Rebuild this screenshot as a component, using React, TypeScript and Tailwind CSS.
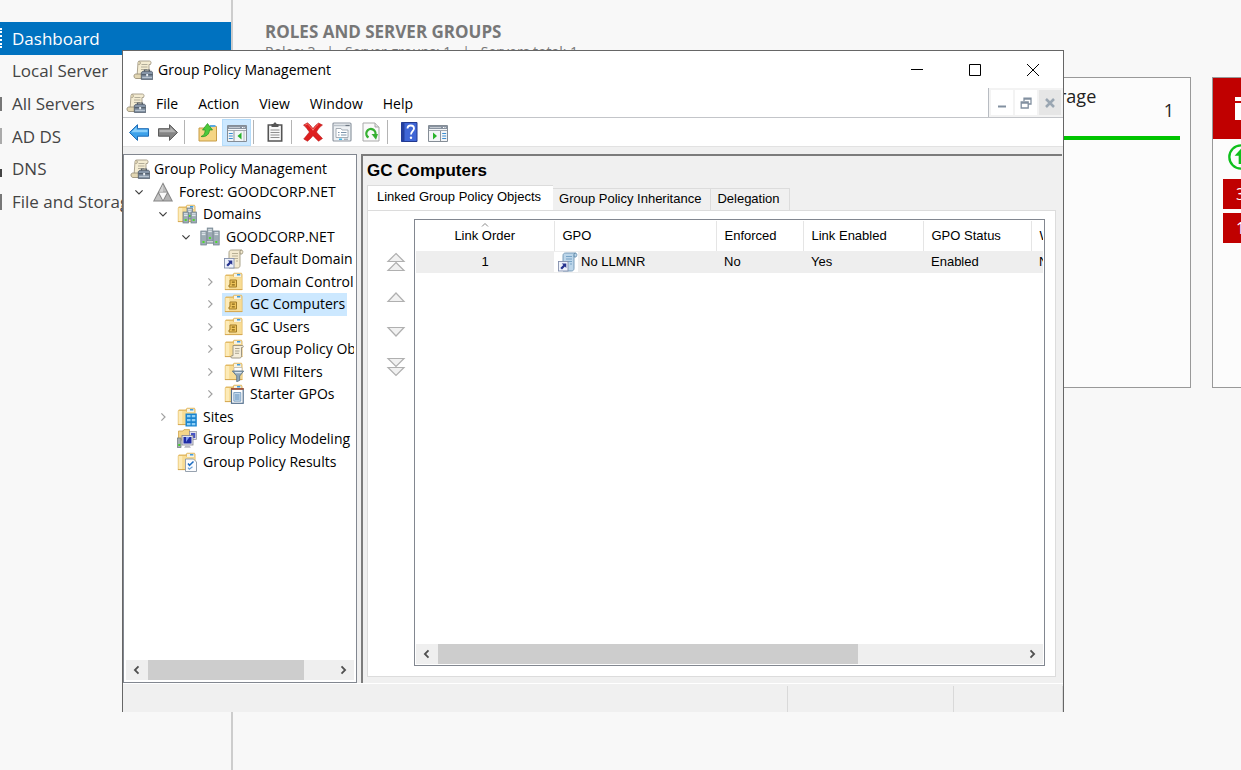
import React from "react";

type P = { className?: string };

const Svg = ({ className = "size-5", children }: { className?: string; children: React.ReactNode }) => (
  <svg viewBox="0 0 20 20" className={`${className} shrink-0`} fill="none" aria-hidden="true">
    {children}
  </svg>
);

const FolderShape = () => (
  <>
    <path d="M.8 4 2 2.500h6.500L10 .8h7.500l1 1.400V18H.8z" fill="#e3bb66" />
    <path d="M10 1.800h7.300v3.400H10z" fill="#f7f3e3" />
    <path d="M13 2h3.300v1.500H13z" fill="#3f9be0" />
    <path d="M1.600 4h7.200l1.500 1.200h7.500V17.200H1.600z" fill="#f8dc94" />
    <path d="M1.600 4h3.600v13.200H1.600z" fill="#fdebb8" />
    <path d="M1 17.300h17.300v.8H1z" fill="#cfa048" />
  </>
);

const ScrollShape = () => (
  <>
    <path d="M5 2.500C5 1.500 6 1 7 1h9.500c1 0 1.700.8 1.500 2l-.5 1.500h-1.500V17H4z" fill="#f4ecd2" stroke="#a39a86" strokeWidth=".9" />
    <path d="M5 1.500c1.500-.6 2.500.3 2.500 1.500S6.500 5 5.200 4.500" fill="#d9cfae" stroke="#a39a86" strokeWidth=".7" />
    <path d="M8.500 4.500h6M8 7h6.500M8 9.500h6" stroke="#aaa693" strokeWidth=".9" />
    <path d="M1 16c0-1.300.8-2 2-2h8v4.500H3c-1.200 0-2-1-2-2.500z" fill="#e2d6b2" stroke="#9b927c" strokeWidth=".9" />
  </>
);

const GpmIcon = ({ className }: P) => (
  <Svg className={className}>
    <ScrollShape />
    <path d="M11.500 12V10h5v2" stroke="#555d66" strokeWidth="1.200" />
    <path d="M8.300 12.500 10 11.300h8.500l1.300 1.200v6.900H8.300z" fill="#8796a8" stroke="#4b5766" strokeWidth=".8" />
    <path d="M8.800 14.800h10.700" stroke="#39434f" strokeWidth=".9" />
    <path d="M13.200 14h1.900v2.300h-1.900z" fill="#e8edf2" />
    <path d="M9.200 17.500h9.800" stroke="#b6c2ce" strokeWidth="1" />
  </Svg>
);

const ForestIcon = () => (
  <Svg>
    <path d="M10 .3 20 19.500H0z" fill="#858585" />
    <path d="M10 2.500 13.800 9.800H6.200z" fill="#bdbdbd" />
    <path d="M10 2.500V9.800H6.200z" fill="#d2d2d2" />
    <path d="M5.300 11.400 9.300 18.600H1.500z" fill="#c2c2c2" />
    <path d="M14.700 11.400 18.500 18.600h-7.800z" fill="#b2b2b2" />
    <path d="M6 10.600h8L10 18z" fill="#fafafa" />
  </Svg>
);

const Server = ({ x, y, h }: { x: number; y: number; h: number }) => (
  <g>
    <rect x={x} y={y} width="5.600" height={h} fill="#9dabb4" stroke="#6d7e8a" strokeWidth=".7" />
    <path d={`M${x + 1} ${y + 1.8}h3.600M${x + 1} ${y + 3.6}h3.600`} stroke="#eef4f7" strokeWidth=".9" />
    <rect x={x + 1.7} y={y + h - 4} width="2" height="2" fill="#4ddb2c" />
  </g>
);

const DomainsIcon = () => (
  <Svg>
    <FolderShape />
    <Server x={10} y={4} h={11} />
    <Server x={6} y={8} h={11} />
    <Server x={14} y={8} h={11} />
  </Svg>
);

const DomainIcon = () => (
  <Svg>
    <Server x={7.2} y={1} h={13} />
    <Server x={0.8} y={4} h={14} />
    <Server x={13.6} y={4} h={14} />
    <path d="M6.600 16h7" stroke="#697a86" strokeWidth="1.200" />
  </Svg>
);

const LinkIcon = ({ blue = false }: { blue?: boolean }) => (
  <Svg>
    <path d="M5 3.500C5 2 6 1 7.500 1H17c1.500 0 2 1 1.800 2.300L18 5h-2v11.500c0 1.500-1 2.500-2.500 2.500H5z" fill={blue ? "#bcd6ea" : "#f3ead0"} stroke={blue ? "#6d93b2" : "#a0987f"} strokeWidth=".9" />
    <path d="M16 5V2.500C16 1.500 17 1 17.500 1.200" stroke={blue ? "#55809f" : "#948b72"} strokeWidth="1" />
    <path d="M8 4.500h6M8 7h6M10 9.500h4M12 12h2" stroke={blue ? "#6f9dc2" : "#b1a98f"} strokeWidth=".9" />
    <rect x=".5" y="9.500" width="9.500" height="9.500" fill="#eef2fb" stroke="#8490ad" strokeWidth=".9" />
    <path d="M3.800 11.500h4.500v4.500L6.900 14.600 4 17.500 2.300 15.900 5.300 13z" fill="#26338f" />
  </Svg>
);

const OuIcon = () => (
  <Svg>
    <FolderShape />
    <path d="M6 8h6.500v7H5V13h1z" fill="#eec35a" stroke="#a27c28" strokeWidth="1" />
    <path d="M7.800 9.500h3v1.300h-3zM7.800 12.300h3v1.300h-3z" fill="#866516" />
  </Svg>
);

const GpoFolderIcon = () => (
  <Svg>
    <FolderShape />
    <path d="M9 6.500h9.500c1 0 1 2 0 2H17.500v8.300c0 1.500-.8 2.200-2 2.200H8c-1.600 0-1.600-2.300 0-2.300h1z" fill="#f5eedb" stroke="#948c7b" strokeWidth=".9" />
    <path d="M11 9.500h4.500M11 12h4.500M11 14.300h4" stroke="#a49c88" strokeWidth=".9" />
  </Svg>
);

const WmiIcon = () => (
  <Svg>
    <FolderShape />
    <path d="M10 5.500h8v4h-8z" fill="#fff" stroke="#aaa" strokeWidth=".6" />
    <path d="M8.300 9h11.400l-4 5v4.500l-3 1.200V14z" fill="#8fa6b8" stroke="#566f84" strokeWidth=".8" />
    <path d="M10.500 10h7.500l-1 1.300h-5.500z" fill="#dae5ec" />
  </Svg>
);

const StarterIcon = () => (
  <Svg>
    <FolderShape />
    <rect x="7.500" y="5" width="11.700" height="14.300" fill="#fff" stroke="#56728f" strokeWidth="1.200" />
    <path d="M7 4h12.700v1.800H7z" fill="#a4553b" />
    <path d="M9.800 8.500h7v8.700h-7z" fill="#c4dbee" stroke="#6c92b5" strokeWidth=".8" />
    <path d="M11 11h4.500M11 13h4.500M11 15h4.500" stroke="#5587b3" strokeWidth=".9" />
  </Svg>
);

const SitesIcon = () => (
  <Svg>
    <FolderShape />
    <path d="M8.500 6.500h11.300v13H8.500z" fill="#1b84cf" />
    <path d="M10 8h3.500v2.300H10zM14.800 8h3.500v2.300h-3.500zM10 12h3.500v2.300H10zM14.800 12h3.500v2.300h-3.500zM10 16h3.500v2.300H10zM14.800 16h3.500v2.300h-3.500z" fill="#8fd0f7" />
  </Svg>
);

const ModelingIcon = () => (
  <Svg>
    <path d="M1.500 2h4.500L7 .6h5.500V11h-11z" fill="#f5d68a" stroke="#d0a54b" strokeWidth=".8" />
    <rect x=".5" y="9" width="3.500" height="9.500" fill="#a7b0b3" stroke="#68757a" strokeWidth=".7" />
    <path d="M1.300 15h2v2h-2z" fill="#43cf28" />
    <rect x="12.500" y="2.500" width="7" height="8" fill="#e2e2ea" stroke="#8b8b99" strokeWidth=".7" />
    <path d="M14 4h4.300v5H14z" fill="#4854c4" />
    <rect x="5" y="6.500" width="11" height="9.500" fill="#e4e4ec" stroke="#82828f" strokeWidth=".8" />
    <path d="M6.500 8h8v6.500h-8z" fill="#1f2ba6" />
    <path d="M9 8h3.500L9 13z" fill="#7f9bf0" />
    <path d="M8.500 16.500h4l1.500 2.300H7z" fill="#b9b9c2" />
  </Svg>
);

const ResultsIcon = () => (
  <Svg>
    <FolderShape />
    <path d="M8.500 7h8l3 3v9.500h-11z" fill="#fbfcfe" stroke="#8b97a6" strokeWidth=".9" />
    <path d="m11 11.500 1.500 1.800 4-3.800" stroke="#1c6cc0" strokeWidth="1.500" />
    <path d="m11 15.700 1.300 1.500 3.200-2.500" stroke="#6aa0d6" strokeWidth="1.200" />
  </Svg>
);

const BackIcon = () => (
  <Svg>
    <path d="M.5 10.500 8.500 2.700V6.700H19.500v7.500H8.500v4.200z" fill="#3ea2ea" stroke="#1c69b4" strokeWidth="1" />
    <path d="M2.200 10.200 7.600 5V7.700h10.900v2.500z" fill="#8bd0fb" />
  </Svg>
);
const ForwardIcon = () => (
  <Svg>
    <path d="M19.500 10.500 11.500 2.700V6.700H.5v7.500h11v4.200z" fill="#858585" stroke="#5c5c5c" strokeWidth="1" />
    <path d="M17.800 10.200 12.400 5V7.700H1.500v2.500z" fill="#b3b3b3" />
  </Svg>
);
const UpFolderIcon = () => (
  <Svg>
    <path d="M1 6h7l1.500-1.500H18.500V19H1z" fill="#f5d584" stroke="#c79c46" strokeWidth="1" />
    <path d="M12 3h5.500v2H12z" fill="#5aa9e2" />
    <path d="M3 14.500c3-1 4-3 4.200-6.500H4.500l5-6.500L14.500 8h-3c0 4-3.500 7.500-8.500 6.500z" fill="#4dc93b" stroke="#259220" strokeWidth=".7" />
  </Svg>
);
const PaneIcon = ({ flip = false }: { flip?: boolean }) => (
  <Svg>
    <path d="M.5 3.500h19v16H.5z" fill="#f3f5f7" stroke="#858d96" strokeWidth="1" />
    <path d="M1 4h18v3H1z" fill="#8993a0" />
    <path d="M2 5.500h11" stroke="#c4cad1" strokeWidth="1" />
    <path d="M15 5.500h3" stroke="#fff" strokeWidth="1" strokeDasharray="1 .6" />
    <path d="M1 8.500h18" stroke="#8d959e" strokeWidth=".8" />
    {flip ? (
      <>
        <path d="M12.500 9v10" stroke="#8d959e" strokeWidth="1" />
        <path d="M14.200 11.500h4M14.200 14h4M14.200 16.500h4" stroke="#3d8ed1" strokeWidth="1.200" />
        <path d="M5 10.500 9 14l-4 3.500z" fill="#27b32a" />
      </>
    ) : (
      <>
        <path d="M7 9v10" stroke="#8d959e" strokeWidth="1" />
        <path d="M1.800 11.500h4M1.800 14h4M1.800 16.500h4" stroke="#3d8ed1" strokeWidth="1.200" />
        <path d="M14.500 10.500 10.500 14l4 3.500z" fill="#27b32a" />
        <path d="M17 9v10" stroke="#a6adb5" strokeWidth=".8" />
      </>
    )}
  </Svg>
);
const ClipboardIcon = () => (
  <Svg>
    <path d="M3.300 3h13.400v16H3.300z" fill="#f9f9f9" stroke="#555" strokeWidth="1.600" />
    <path d="M6.500 3V2h2c0-2 3-2 3 0h2v3h-7z" fill="#555" />
    <path d="M5.500 8h9M5.500 10.500h9M5.500 13h9M5.500 15.500h9" stroke="#8f8f8f" strokeWidth="1.100" />
  </Svg>
);
const DeleteIcon = () => (
  <Svg>
    <path d="M.5 3 4.500.8c2 1.500 3.800 3.400 5.500 5.700 1.500-2.300 3.300-4 5.500-5.500L19.500 3c-2.700 2-4.700 4.500-6 7 2.300 2.700 4.300 4.700 6 6.500L15.500 19.300c-2-2-3.700-4-5.500-5.600-1.700 2-3.500 4-5.500 5.600L.7 17c2-2.500 3.800-4.500 5.700-7-1.700-2.500-3.700-5-5.900-7z" fill="#de1f1f" stroke="#b01212" strokeWidth=".5" />
    <path d="M2.200 3 4.300 1.900c2 1.500 4 3.500 5.700 6.400C11.500 6 13.500 3.500 15.500 2" stroke="#f6746f" strokeWidth="1" />
  </Svg>
);
const PropertiesIcon = () => (
  <Svg>
    <rect x="1" y="1" width="18" height="18" rx="1" fill="#eef1f4" stroke="#8f98a2" strokeWidth="1.200" />
    <path d="M2 3.500h16" stroke="#b9c1c9" strokeWidth="1.500" />
    <path d="M13.500 3.500h4" stroke="#6d7782" strokeWidth="1.200" />
    <path d="M4 6.500h5L10 8h6v7.500H4z" fill="#fff" stroke="#9ca5ae" strokeWidth=".9" />
    <path d="M6 10.500h1.500M9 10.500h5.500M6 13h1.500M9 13h5.500" stroke="#7d94aa" strokeWidth="1.100" />
    <path d="M7 17.300h3" stroke="#3fb8e8" strokeWidth="1.500" />
    <path d="M12 17.300h4" stroke="#aab3bc" strokeWidth="1.500" />
  </Svg>
);
const RefreshIcon = () => (
  <Svg>
    <path d="M2 1h12l4 4v14H2z" fill="#fafafa" stroke="#a9a9a9" strokeWidth="1" />
    <path d="M14 1v4h4" fill="#e2e2e2" stroke="#a9a9a9" strokeWidth="1" />
    <path d="M7.500 15.500A4.600 4.600 0 1 1 14.300 13" stroke="#37b032" strokeWidth="2.300" />
    <path d="M10.500 12h6.500L15 17.700z" fill="#37b032" />
  </Svg>
);
const HelpIcon = () => (
  <Svg>
    <path d="M2.500.5h15.500v19H2.500z" fill="#3f66d6" stroke="#22398f" strokeWidth="1" />
    <path d="M2.500.5H5.500v19H2.500z" fill="#2440a0" />
    <path d="M8.500 6.500c0-4 6.500-4 6.500 0 0 2.500-3 3-3 6" stroke="#fff" strokeWidth="1.800" />
    <circle cx="12" cy="15.700" r="1.200" fill="#fff" />
  </Svg>
);

const Chevron = ({ open }: { open: boolean }) => (
  <Svg className="size-4">
    {open ? (
      <path d="m5.500 8 4.500 4.500L14.500 8" stroke="#404040" strokeWidth="1.500" />
    ) : (
      <path d="m8 5.500 4.500 4.500L8 14.500" stroke="#a0a0a0" strokeWidth="1.500" />
    )}
  </Svg>
);

type Node = { level: number; label: string; icon: React.ReactNode; open?: boolean; selected?: boolean };

const indents = ["pl-1", "pl-[5px]", "pl-[29px]", "pl-[52px]", "pl-[76px]"];

const tree: Node[] = [
  { level: 0, label: "Group Policy Management", icon: <GpmIcon /> },
  { level: 1, label: "Forest: GOODCORP.NET", icon: <ForestIcon />, open: true },
  { level: 2, label: "Domains", icon: <DomainsIcon />, open: true },
  { level: 3, label: "GOODCORP.NET", icon: <DomainIcon />, open: true },
  { level: 4, label: "Default Domain Policy", icon: <LinkIcon /> },
  { level: 4, label: "Domain Controllers", icon: <OuIcon />, open: false },
  { level: 4, label: "GC Computers", icon: <OuIcon />, open: false, selected: true },
  { level: 4, label: "GC Users", icon: <OuIcon />, open: false },
  { level: 4, label: "Group Policy Objects", icon: <GpoFolderIcon />, open: false },
  { level: 4, label: "WMI Filters", icon: <WmiIcon />, open: false },
  { level: 4, label: "Starter GPOs", icon: <StarterIcon />, open: false },
  { level: 2, label: "Sites", icon: <SitesIcon />, open: false },
  { level: 2, label: "Group Policy Modeling", icon: <ModelingIcon /> },
  { level: 2, label: "Group Policy Results", icon: <ResultsIcon /> },
];

const TreeRow = ({ node }: { node: Node }) => (
  <li className={`flex min-h-0 flex-1 items-center whitespace-nowrap ${indents[node.level]}`}>
    {node.level > 0 && (
      <span className="mr-1 flex w-4 shrink-0">{node.open !== undefined && <Chevron open={node.open} />}</span>
    )}
    <button
      type="button"
      className={`flex h-full items-center text-left ${node.level === 0 ? "gap-1" : "gap-1.5 px-0.5"} ${
        node.selected ? "bg-[#cce8ff]" : ""
      }`}
    >
      {node.icon}
      <span>{node.label}</span>
    </button>
  </li>
);

const ScrollArrow = ({ dir }: { dir: "left" | "right" }) => (
  <button type="button" aria-label={`Scroll ${dir}`} className="flex w-[22px] shrink-0 items-center justify-center">
    <Svg className="size-3">
      <path d={dir === "left" ? "m12.500 4-6 6 6 6" : "m7.500 4 6 6-6 6"} stroke="#505050" strokeWidth="3" />
    </Svg>
  </button>
);

const ScrollBar = ({ size }: { size: "tree" | "list" }) => (
  <div className="flex h-5 shrink-0 bg-[#efefef]">
    <ScrollArrow dir="left" />
    <div className="flex-1">
      <div className={`h-full bg-[#cdcdcd] ${size === "tree" ? "w-[85%]" : "w-[72%]"}`} />
    </div>
    <ScrollArrow dir="right" />
  </div>
);

const Tool = ({ label, active, children }: { label: string; active?: boolean; children: React.ReactNode }) => (
  <button
    type="button"
    aria-label={label}
    className={`flex h-[27px] w-[29px] items-center justify-center ${active ? "border border-[#b5dcfa] bg-[#cce8ff]" : ""}`}
  >
    {children}
  </button>
);
const Divider = () => <span className="h-6 w-px bg-[#b4b4b4]" />;

const OrderIcon = ({ kind }: { kind: string }) => (
  <svg viewBox="0 0 20 20" className="size-5" fill="#f1f1f1" stroke="#b0b0b0" strokeWidth="1.200" aria-hidden="true">
    {kind === "Move to top" && <path d="M10 1.500 18 9.500H2zM10 10.500 18 18.500H2z" />}
    {kind === "Move up" && <path d="M10 6 18 14.500H2z" />}
    {kind === "Move down" && <path d="M2 5.500h16L10 14z" />}
    {kind === "Move to bottom" && <path d="M2 1.500h16l-8 8zM2 10.500h16l-8 8z" />}
  </svg>
);

const servers = ["Dashboard", "Local Server", "All Servers", "AD DS", "DNS", "File and Storage Services"];
const glyphs = [
  "h-5 border-r-2 border-dotted border-white",
  "",
  "h-3.5 bg-[#777]",
  "h-4 bg-[#aaa]",
  "mt-2 h-2 bg-[#444]",
  "h-4 bg-[#777]",
];

const Sidebar = () => (
  <nav className="w-[233px] shrink-0 border-r-2 border-[#cdcdcd] pt-[22px] text-[17px] text-[#444]">
    <ul className="flex h-[196px] flex-col">
      {servers.map((s, i) => (
        <li key={s} className="flex flex-1">
          <a href="#" className={`flex flex-1 items-center gap-[10px] whitespace-nowrap ${i === 0 ? "bg-[#0072c0] text-white" : ""}`}>
            <span className={`w-0.5 ${glyphs[i]}`} />
            {s}
          </a>
        </li>
      ))}
    </ul>
  </nav>
);

const Dashboard = () => (
  <main className="min-w-0 flex-1 overflow-hidden pt-5 text-[#777]">
    <h1 className="pl-8 text-[17px] leading-6 font-bold">ROLES AND SERVER GROUPS</h1>
    <p className="pl-8 text-sm leading-4 whitespace-pre">{"Roles: 3   |   Server groups: 1   |   Servers total: 1"}</p>
    <div className="mt-[17px] ml-[734px] flex h-[311px] gap-[21px]">
      <section className="w-[224px] shrink-0 border border-[#999] bg-[#fcfcfc] px-[10px] text-[#222]">
        <div className="flex h-[62px] items-start justify-between border-b-4 border-[#00c400] pr-1.5">
          <h2 className="-ml-4 pt-1.5 text-lg leading-6">File and Storage</h2>
          <span className="pt-5 text-lg leading-6">1</span>
        </div>
      </section>
      <section className="w-[224px] shrink-0 border border-[#999] bg-[#fcfcfc] text-white">
        <div className="flex h-[61px] items-center bg-[#c00000] pl-[22px]">
          <svg viewBox="0 0 24 24" className="size-6" fill="#fff" aria-hidden="true">
            <path d="M0 0h24v4H0zM0 6h24v17H0z" />
          </svg>
        </div>
        <div className="flex flex-col items-start gap-1 pt-1 pl-[10px]">
          <svg viewBox="0 0 24 24" className="mb-1 ml-1 size-7" fill="none" aria-hidden="true">
            <circle cx="12" cy="12" r="10" stroke="#0fc01c" strokeWidth="2" />
            <path d="M12 5 6.500 11H10v7h4v-7h3.500z" fill="#0fc01c" />
          </svg>
          <span className="w-12 bg-[#c00000] pl-[13px] text-base leading-[30px]">3</span>
          <span className="w-12 bg-[#c00000] pl-[13px] text-base leading-[30px]">1</span>
        </div>
      </section>
    </div>
  </main>
);

const tabs = ["Linked Group Policy Objects", "Group Policy Inheritance", "Delegation"];
const heads = ["Link Order", "GPO", "Enforced", "Link Enabled", "GPO Status", "WMI Filter"];
const orders = ["Move to top", "Move up", "Move down", "Move to bottom"];

const Details = () => (
  <section className="flex min-w-0 flex-1 flex-col border-t-2 border-l-2 border-[#7c7c7c] bg-[#f0f0f0] pr-1.5 pb-1.5 pl-1 font-['Liberation_Sans',Arial,sans-serif] text-[13px] text-black">
    <h2 className="h-[29px] text-[17px] leading-[30px] font-bold">GC Computers</h2>
    <div role="tablist" className="flex h-[25px] items-end">
      {tabs.map((t, i) => (
        <button
          key={t}
          type="button"
          role="tab"
          aria-selected={i === 0}
          className={
            i === 0
              ? "h-full border-t border-l border-[#dcdcdc] bg-white pr-3 pb-0.5 pl-[9px]"
              : "h-[22px] border-t border-r border-[#dcdcdc] pr-[9px] pl-1.5"
          }
        >
          {t}
        </button>
      ))}
    </div>
    <div className="flex min-h-0 flex-1 border border-[#dcdcdc] bg-white pt-2 pr-2.5 pb-[10px]">
      <div className="flex w-[46px] shrink-0 flex-col items-center gap-[15px] pt-[33px] pl-[10px]">
        {orders.map((o) => (
          <button key={o} type="button" aria-label={o} className="flex">
            <OrderIcon kind={o} />
          </button>
        ))}
      </div>
      <div className="flex min-w-0 flex-1 flex-col border border-[#828790] p-px">
        <div className="min-h-0 flex-1 overflow-hidden">
          <table className="w-[720px] table-fixed text-left">
            <colgroup>
              <col className="w-[138px]" />
              <col className="w-[162px]" />
              <col className="w-[87px]" />
              <col className="w-[120px]" />
              <col className="w-[108px]" />
              <col />
            </colgroup>
            <thead>
              <tr className="h-[30px]">
                {heads.map((h, i) => (
                  <th key={h} className={`relative border-r border-[#e5e5e5] px-2 font-normal ${i === 0 ? "text-center" : ""}`}>
                    {i === 0 && (
                      <svg viewBox="0 0 8 4" className="absolute top-0.5 left-1/2 h-1 w-2 -translate-x-1/2" fill="none" stroke="#888" aria-hidden="true">
                        <path d="m1 3.500 3-3 3 3" />
                      </svg>
                    )}
                    {h}
                  </th>
                ))}
              </tr>
            </thead>
            <tbody>
              <tr className="h-[22px] bg-[#eeeeee]">
                <td className="text-center">1</td>
                <td>
                  <span className="flex items-center">
                    <span className="bg-white pl-1">
                      <LinkIcon blue />
                    </span>
                    <span className="pl-[3px]">No LLMNR</span>
                  </span>
                </td>
                <td className="px-2">No</td>
                <td className="px-2">Yes</td>
                <td className="px-2">Enabled</td>
                <td className="px-2">None</td>
              </tr>
            </tbody>
          </table>
        </div>
        <ScrollBar size="list" />
      </div>
    </div>
  </section>
);

const PolicyWindow = () => (
  <div className="absolute top-[50px] right-[177px] bottom-[58px] left-[122px] flex flex-col border border-b-0 border-[#666] bg-[#f0f0f0] text-sm text-black">
    <header className="flex h-[37px] shrink-0 items-center bg-white pl-[10px]">
      <GpmIcon />
      <h1 className="flex-1 pl-[5px]">Group Policy Management</h1>
      <button type="button" aria-label="Minimize" className="flex h-full w-[58px] items-center justify-center">
        <svg viewBox="0 0 12 12" className="size-3" stroke="#000" aria-hidden="true">
          <path d="M0 5.500h12" />
        </svg>
      </button>
      <button type="button" aria-label="Maximize" className="flex h-full w-[58px] items-center justify-center">
        <svg viewBox="0 0 12 12" className="size-3" stroke="#000" fill="none" aria-hidden="true">
          <path d="M.5.5h11v11H.5z" />
        </svg>
      </button>
      <button type="button" aria-label="Close" className="mr-px flex h-full w-[58px] items-center justify-center">
        <svg viewBox="0 0 12 12" className="size-3" stroke="#000" aria-hidden="true">
          <path d="m0 0 12 12M12 0 0 12" />
        </svg>
      </button>
    </header>
    <div className="flex h-[30px] shrink-0 items-center border-b border-[#c3c5c9] bg-white pl-[3px]">
      <GpmIcon />
      <div role="menubar" className="flex flex-1 gap-5 pt-0.5 pl-2.5">
        {["File", "Action", "View", "Window", "Help"].map((m) => (
          <button key={m} type="button" role="menuitem">
            {m}
          </button>
        ))}
      </div>
      <div className="flex h-full gap-0.5 border-l border-[#b8bcc2] bg-[#f3f3f3] p-0.5">
        <button type="button" aria-label="Minimize child window" className="flex w-[22px] items-center justify-center bg-white">
          <svg viewBox="0 0 12 12" className="size-3" stroke="#8290a0" strokeWidth="2" aria-hidden="true">
            <path d="M2 9.500h8" />
          </svg>
        </button>
        <button type="button" aria-label="Restore child window" className="flex w-[22px] items-center justify-center bg-white">
          <svg viewBox="0 0 12 12" className="size-3" stroke="#8290a0" fill="none" strokeWidth="1.300" aria-hidden="true">
            <path d="M4 4V1.200h7V7H8.500M4 2h7M1.200 5h7v6h-7zM1.200 6h7" />
          </svg>
        </button>
        <button type="button" aria-label="Close child window" className="flex w-[22px] items-center justify-center bg-[#e6e6e6]">
          <svg viewBox="0 0 12 12" className="size-3" stroke="#9aa6b2" strokeWidth="2.500" aria-hidden="true">
            <path d="m2 2 8 8M10 2l-8 8" />
          </svg>
        </button>
      </div>
    </div>
    <div role="toolbar" className="flex h-[29px] shrink-0 items-center border-b border-[#e2e2e2] bg-white pl-px">
      <Tool label="Back"><BackIcon /></Tool>
      <Tool label="Forward"><ForwardIcon /></Tool>
      <span className="flex items-center pr-2 pl-0.5"><Divider /></span>
      <Tool label="Up one level"><UpFolderIcon /></Tool>
      <Tool label="Show or hide console tree" active><PaneIcon /></Tool>
      <span className="flex items-center pr-1.5 pl-0.5"><Divider /></span>
      <Tool label="Clipboard"><ClipboardIcon /></Tool>
      <span className="flex items-center pr-1.5 pl-0.5"><Divider /></span>
      <Tool label="Delete"><DeleteIcon /></Tool>
      <Tool label="Properties"><PropertiesIcon /></Tool>
      <Tool label="Refresh"><RefreshIcon /></Tool>
      <span className="flex items-center pr-1.5 pl-0.5"><Divider /></span>
      <Tool label="Help"><HelpIcon /></Tool>
      <Tool label="Show or hide action pane"><PaneIcon flip /></Tool>
    </div>
    <div className="flex min-h-0 flex-1 gap-1 border-b border-white pt-[7px] pr-px">
      <aside className="flex w-[234px] shrink-0 flex-col border border-[#828790] bg-white p-0.5 pt-[3px]">
        <ul className="flex h-[315px] flex-col overflow-hidden">
          {tree.map((n) => (
            <TreeRow key={n.label + n.level} node={n} />
          ))}
        </ul>
        <div className="flex-1" />
        <ScrollBar size="tree" />
      </aside>
      <Details />
    </div>
    <footer className="flex h-[28px] shrink-0 pt-0.5">
      <span className="flex-1" />
      <span className="w-[166px] border-l border-[#d9d9d9]" />
      <span className="w-[110px] border-x border-[#d9d9d9]" />
    </footer>
  </div>
);

export default function App() {
  return (
    <div className="relative flex h-screen overflow-hidden bg-[#f8f8f8] font-['Open_Sans','Noto_Sans',sans-serif]">
      <Sidebar />
      <Dashboard />
      <PolicyWindow />
    </div>
  );
}
